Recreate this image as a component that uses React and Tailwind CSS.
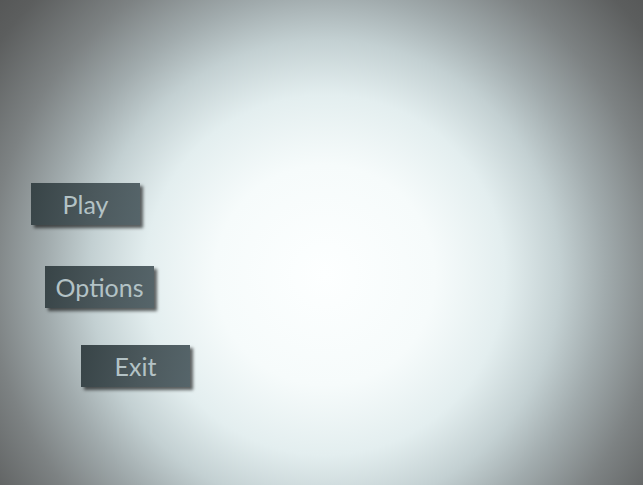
export default function App() {
  const btn =
    "flex h-[42px] w-[109px] items-center justify-center bg-[linear-gradient(100deg,#384447_0%,#4b585c_55%,#56656a_100%)] shadow-[3px_3px_3px_rgba(0,0,0,0.6)] text-[25px] leading-none text-[#b3c2c5] font-['Lato','Liberation_Sans',sans-serif]";

  return (
    <div className="h-[485px] w-[643px] overflow-hidden bg-[radial-gradient(circle_at_325px_275px,#fdffff_0px,#f6fbfb_110px,#e3eeef_180px,#c3d0d2_235px,#a1abad_280px,#7d8283_335px,#5c5e5e_400px,#4e4f4f_460px)]">
      <div className="flex flex-col items-start pt-[183px]">
        <button className={`${btn} ml-[31px]`}>Play</button>
        <button className={`${btn} ml-[45px] mt-[41px]`}>Options</button>
        <button className={`${btn} ml-[81px] mt-[37px]`}>Exit</button>
      </div>
    </div>
  );
}
